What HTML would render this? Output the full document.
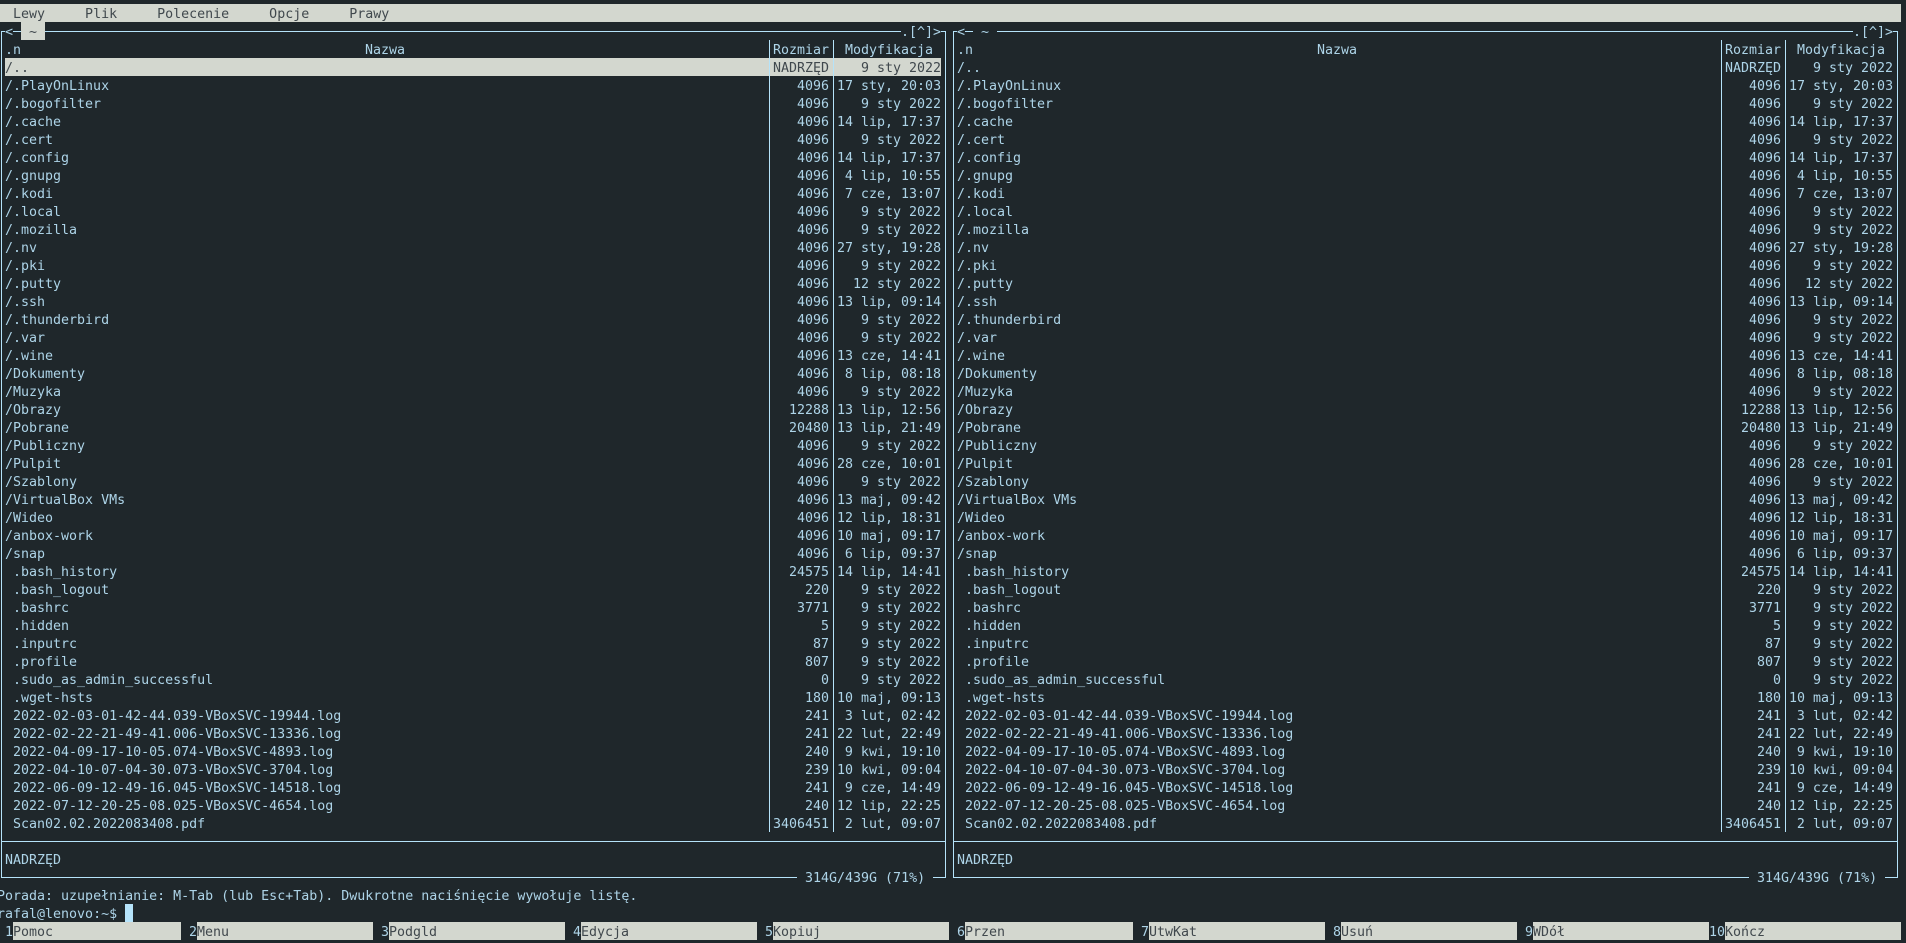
<!DOCTYPE html>
<html lang="pl">
<head>
<meta charset="utf-8">
<title>mc</title>
<style>
html,body{margin:0;padding:0;width:1906px;height:943px;overflow:hidden;background:#1f272b}
body{position:relative;font-family:"DejaVu Sans Mono","Liberation Mono",monospace;font-size:13.3px;color:#add4e8}
pre,.a{position:absolute;margin:0}
pre{font:inherit;line-height:18px;white-space:pre;letter-spacing:0;color:inherit;margin-top:2px}
.p{position:absolute;left:-3px;top:0;width:952px;height:943px}
.q{left:949px}
.h{position:absolute;height:1px;background:#b5e3fa}
.v{position:absolute;width:1px;background:#b5e3fa}
.bar{position:absolute;background:#d3d7cf}
.d{color:#40484d}
.r{text-align:right}
</style>
</head>
<body>
<div class="bar" style="left:0;top:4px;width:1901px;height:18px"></div>
<pre class="d" style="left:-3px;top:4px">  Lewy     Plik     Polecenie     Opcje     Prawy</pre>

<div class="p">
<div class="bar" style="left:24px;top:22px;width:24px;height:18px"></div>
<div class="bar" style="left:8px;top:58px;width:936px;height:18px"></div>
<div class="h" style="left:4px;top:31px;width:4px"></div>
<div class="h" style="left:16px;top:31px;width:8px"></div>
<div class="h" style="left:48px;top:31px;width:856px"></div>
<div class="h" style="left:4px;top:841px;width:944px"></div>
<div class="h" style="left:4px;top:877px;width:796px"></div>
<div class="h" style="left:936px;top:877px;width:12px"></div>
<div class="h" style="left:944px;top:31px;width:4px"></div>
<div class="v" style="left:4px;top:31px;height:847px"></div>
<div class="v" style="left:948px;top:31px;height:847px"></div>
<div class="v" style="left:772px;top:40px;height:792px"></div>
<div class="v" style="left:836px;top:40px;height:792px"></div>
<pre style="left:8px;top:22px">&lt;</pre>
<pre class="d" style="left:24px;top:22px"> ~ </pre>
<pre style="left:904px;top:22px">.[^]&gt;</pre>
<pre style="left:8px;top:40px">.n</pre>
<pre style="left:368px;top:40px">Nazwa</pre>
<pre style="left:776px;top:40px">Rozmiar</pre>
<pre style="left:848px;top:40px">Modyfikacja</pre>
<pre style="left:8px;top:58px"><span class="d">/..</span>
/.PlayOnLinux
/.bogofilter
/.cache
/.cert
/.config
/.gnupg
/.kodi
/.local
/.mozilla
/.nv
/.pki
/.putty
/.ssh
/.thunderbird
/.var
/.wine
/Dokumenty
/Muzyka
/Obrazy
/Pobrane
/Publiczny
/Pulpit
/Szablony
/VirtualBox VMs
/Wideo
/anbox-work
/snap
 .bash_history
 .bash_logout
 .bashrc
 .hidden
 .inputrc
 .profile
 .sudo_as_admin_successful
 .wget-hsts
 2022-02-03-01-42-44.039-VBoxSVC-19944.log
 2022-02-22-21-49-41.006-VBoxSVC-13336.log
 2022-04-09-17-10-05.074-VBoxSVC-4893.log
 2022-04-10-07-04-30.073-VBoxSVC-3704.log
 2022-06-09-12-49-16.045-VBoxSVC-14518.log
 2022-07-12-20-25-08.025-VBoxSVC-4654.log
 Scan02.02.2022083408.pdf</pre>
<pre class="r" style="left:776px;width:56px;top:58px"><span class="d">NADRZĘD</span>
4096
4096
4096
4096
4096
4096
4096
4096
4096
4096
4096
4096
4096
4096
4096
4096
4096
4096
12288
20480
4096
4096
4096
4096
4096
4096
4096
24575
220
3771
5
87
807
0
180
241
241
240
239
241
240
3406451</pre>
<pre class="r" style="left:840px;width:104px;top:58px"><span class="d">9 sty 2022</span>
17 sty, 20:03
9 sty 2022
14 lip, 17:37
9 sty 2022
14 lip, 17:37
4 lip, 10:55
7 cze, 13:07
9 sty 2022
9 sty 2022
27 sty, 19:28
9 sty 2022
12 sty 2022
13 lip, 09:14
9 sty 2022
9 sty 2022
13 cze, 14:41
8 lip, 08:18
9 sty 2022
13 lip, 12:56
13 lip, 21:49
9 sty 2022
28 cze, 10:01
9 sty 2022
13 maj, 09:42
12 lip, 18:31
10 maj, 09:17
6 lip, 09:37
14 lip, 14:41
9 sty 2022
9 sty 2022
9 sty 2022
9 sty 2022
9 sty 2022
9 sty 2022
10 maj, 09:13
3 lut, 02:42
22 lut, 22:49
9 kwi, 19:10
10 kwi, 09:04
9 cze, 14:49
12 lip, 22:25
2 lut, 09:07</pre>
<pre style="left:8px;top:850px">NADRZĘD</pre>
<pre style="left:808px;top:868px">314G/439G (71%)</pre>
</div>

<div class="p q">
<div class="h" style="left:4px;top:31px;width:4px"></div>
<div class="h" style="left:16px;top:31px;width:8px"></div>
<div class="h" style="left:48px;top:31px;width:856px"></div>
<div class="h" style="left:4px;top:841px;width:944px"></div>
<div class="h" style="left:4px;top:877px;width:796px"></div>
<div class="h" style="left:936px;top:877px;width:12px"></div>
<div class="h" style="left:944px;top:31px;width:4px"></div>
<div class="v" style="left:4px;top:31px;height:847px"></div>
<div class="v" style="left:948px;top:31px;height:847px"></div>
<div class="v" style="left:772px;top:40px;height:792px"></div>
<div class="v" style="left:836px;top:40px;height:792px"></div>
<pre style="left:8px;top:22px">&lt;</pre>
<pre style="left:24px;top:22px"> ~ </pre>
<pre style="left:904px;top:22px">.[^]&gt;</pre>
<pre style="left:8px;top:40px">.n</pre>
<pre style="left:368px;top:40px">Nazwa</pre>
<pre style="left:776px;top:40px">Rozmiar</pre>
<pre style="left:848px;top:40px">Modyfikacja</pre>
<pre style="left:8px;top:58px">/..
/.PlayOnLinux
/.bogofilter
/.cache
/.cert
/.config
/.gnupg
/.kodi
/.local
/.mozilla
/.nv
/.pki
/.putty
/.ssh
/.thunderbird
/.var
/.wine
/Dokumenty
/Muzyka
/Obrazy
/Pobrane
/Publiczny
/Pulpit
/Szablony
/VirtualBox VMs
/Wideo
/anbox-work
/snap
 .bash_history
 .bash_logout
 .bashrc
 .hidden
 .inputrc
 .profile
 .sudo_as_admin_successful
 .wget-hsts
 2022-02-03-01-42-44.039-VBoxSVC-19944.log
 2022-02-22-21-49-41.006-VBoxSVC-13336.log
 2022-04-09-17-10-05.074-VBoxSVC-4893.log
 2022-04-10-07-04-30.073-VBoxSVC-3704.log
 2022-06-09-12-49-16.045-VBoxSVC-14518.log
 2022-07-12-20-25-08.025-VBoxSVC-4654.log
 Scan02.02.2022083408.pdf</pre>
<pre class="r" style="left:776px;width:56px;top:58px">NADRZĘD
4096
4096
4096
4096
4096
4096
4096
4096
4096
4096
4096
4096
4096
4096
4096
4096
4096
4096
12288
20480
4096
4096
4096
4096
4096
4096
4096
24575
220
3771
5
87
807
0
180
241
241
240
239
241
240
3406451</pre>
<pre class="r" style="left:840px;width:104px;top:58px">9 sty 2022
17 sty, 20:03
9 sty 2022
14 lip, 17:37
9 sty 2022
14 lip, 17:37
4 lip, 10:55
7 cze, 13:07
9 sty 2022
9 sty 2022
27 sty, 19:28
9 sty 2022
12 sty 2022
13 lip, 09:14
9 sty 2022
9 sty 2022
13 cze, 14:41
8 lip, 08:18
9 sty 2022
13 lip, 12:56
13 lip, 21:49
9 sty 2022
28 cze, 10:01
9 sty 2022
13 maj, 09:42
12 lip, 18:31
10 maj, 09:17
6 lip, 09:37
14 lip, 14:41
9 sty 2022
9 sty 2022
9 sty 2022
9 sty 2022
9 sty 2022
9 sty 2022
10 maj, 09:13
3 lut, 02:42
22 lut, 22:49
9 kwi, 19:10
10 kwi, 09:04
9 cze, 14:49
12 lip, 22:25
2 lut, 09:07</pre>
<pre style="left:8px;top:850px">NADRZĘD</pre>
<pre style="left:808px;top:868px">314G/439G (71%)</pre>
</div>

<pre style="left:-3px;top:886px">Porada: uzupełnianie: M-Tab (lub Esc+Tab). Dwukrotne naciśnięcie wywołuje listę.</pre>
<pre style="left:-3px;top:904px">rafal@lenovo:~$</pre>
<div class="a" style="left:125px;top:904px;width:8px;height:18px;background:#b5e3fa"></div>

<div class="bar" style="left:13px;top:922px;width:168px;height:18px"></div>
<div class="bar" style="left:197px;top:922px;width:176px;height:18px"></div>
<div class="bar" style="left:389px;top:922px;width:176px;height:18px"></div>
<div class="bar" style="left:581px;top:922px;width:176px;height:18px"></div>
<div class="bar" style="left:773px;top:922px;width:176px;height:18px"></div>
<div class="bar" style="left:965px;top:922px;width:168px;height:18px"></div>
<div class="bar" style="left:1149px;top:922px;width:176px;height:18px"></div>
<div class="bar" style="left:1341px;top:922px;width:176px;height:18px"></div>
<div class="bar" style="left:1533px;top:922px;width:176px;height:18px"></div>
<div class="bar" style="left:1725px;top:922px;width:176px;height:18px"></div>
<pre style="left:5px;top:922px">1</pre><pre class="d" style="left:13px;top:922px">Pomoc</pre>
<pre style="left:189px;top:922px">2</pre><pre class="d" style="left:197px;top:922px">Menu</pre>
<pre style="left:381px;top:922px">3</pre><pre class="d" style="left:389px;top:922px">Podgld</pre>
<pre style="left:573px;top:922px">4</pre><pre class="d" style="left:581px;top:922px">Edycja</pre>
<pre style="left:765px;top:922px">5</pre><pre class="d" style="left:773px;top:922px">Kopiuj</pre>
<pre style="left:957px;top:922px">6</pre><pre class="d" style="left:965px;top:922px">Przen</pre>
<pre style="left:1141px;top:922px">7</pre><pre class="d" style="left:1149px;top:922px">UtwKat</pre>
<pre style="left:1333px;top:922px">8</pre><pre class="d" style="left:1341px;top:922px">Usuń</pre>
<pre style="left:1525px;top:922px">9</pre><pre class="d" style="left:1533px;top:922px">WDół</pre>
<pre style="left:1709px;top:922px">10</pre><pre class="d" style="left:1725px;top:922px">Kończ</pre>
</body>
</html>
